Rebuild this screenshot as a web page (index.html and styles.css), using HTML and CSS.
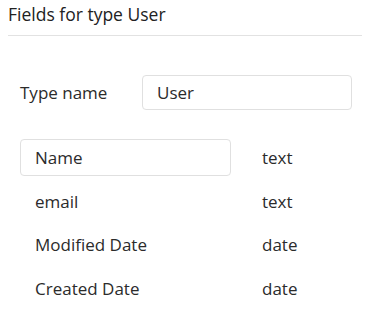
FILE: index.html
```html
<!DOCTYPE html>
<html>
<head>
<meta charset="utf-8">
<link rel="stylesheet" href="styles.css">
</head>
<body>
<div class="panel">
  <div class="header">Fields for type User</div>
  <div class="type-row">
    <span class="label">Type name</span>
    <div class="input type-input">User</div>
  </div>
  <div class="fields">
    <div class="input name-input">Name</div><div class="ftype">text</div>
    <div class="fname">email</div><div class="ftype">text</div>
    <div class="fname">Modified Date</div><div class="ftype">date</div>
    <div class="fname">Created Date</div><div class="ftype">date</div>
  </div>
</div>
</body>
</html>
```
FILE: styles.css
```css
html, body {
  margin: 0;
  padding: 0;
  background: #fff;
}
body {
  font-family: "Open Sans", "Noto Sans", sans-serif;
  font-size: 17px;
  color: #2b2b2b;
}
.panel {
  width: 382px;
}
.header {
  margin: 0 20px 0 8px;
  height: 36px;
  box-sizing: border-box;
  font-size: 17.5px;
  line-height: 28px;
  border-bottom: 1px solid #e2e2e2;
  color: #222;
}
.type-row {
  display: flex;
  align-items: center;
  margin-top: 39px;
  padding-left: 20px;
}
.label {
  width: 122px;
}
.input {
  box-sizing: border-box;
  border: 1px solid #e0e0e0;
  border-radius: 4px;
  padding: 0 14px;
  display: flex;
  align-items: center;
}
.type-input {
  width: 210px;
  height: 35px;
}
.fields {
  margin-top: 26px;
  padding-left: 20px;
  display: grid;
  grid-template-columns: 211px auto;
  column-gap: 31px;
  grid-auto-rows: 43.5px;
  align-items: center;
}
.name-input {
  height: 37px;
}
.fname {
  padding-left: 15px;
}
```
